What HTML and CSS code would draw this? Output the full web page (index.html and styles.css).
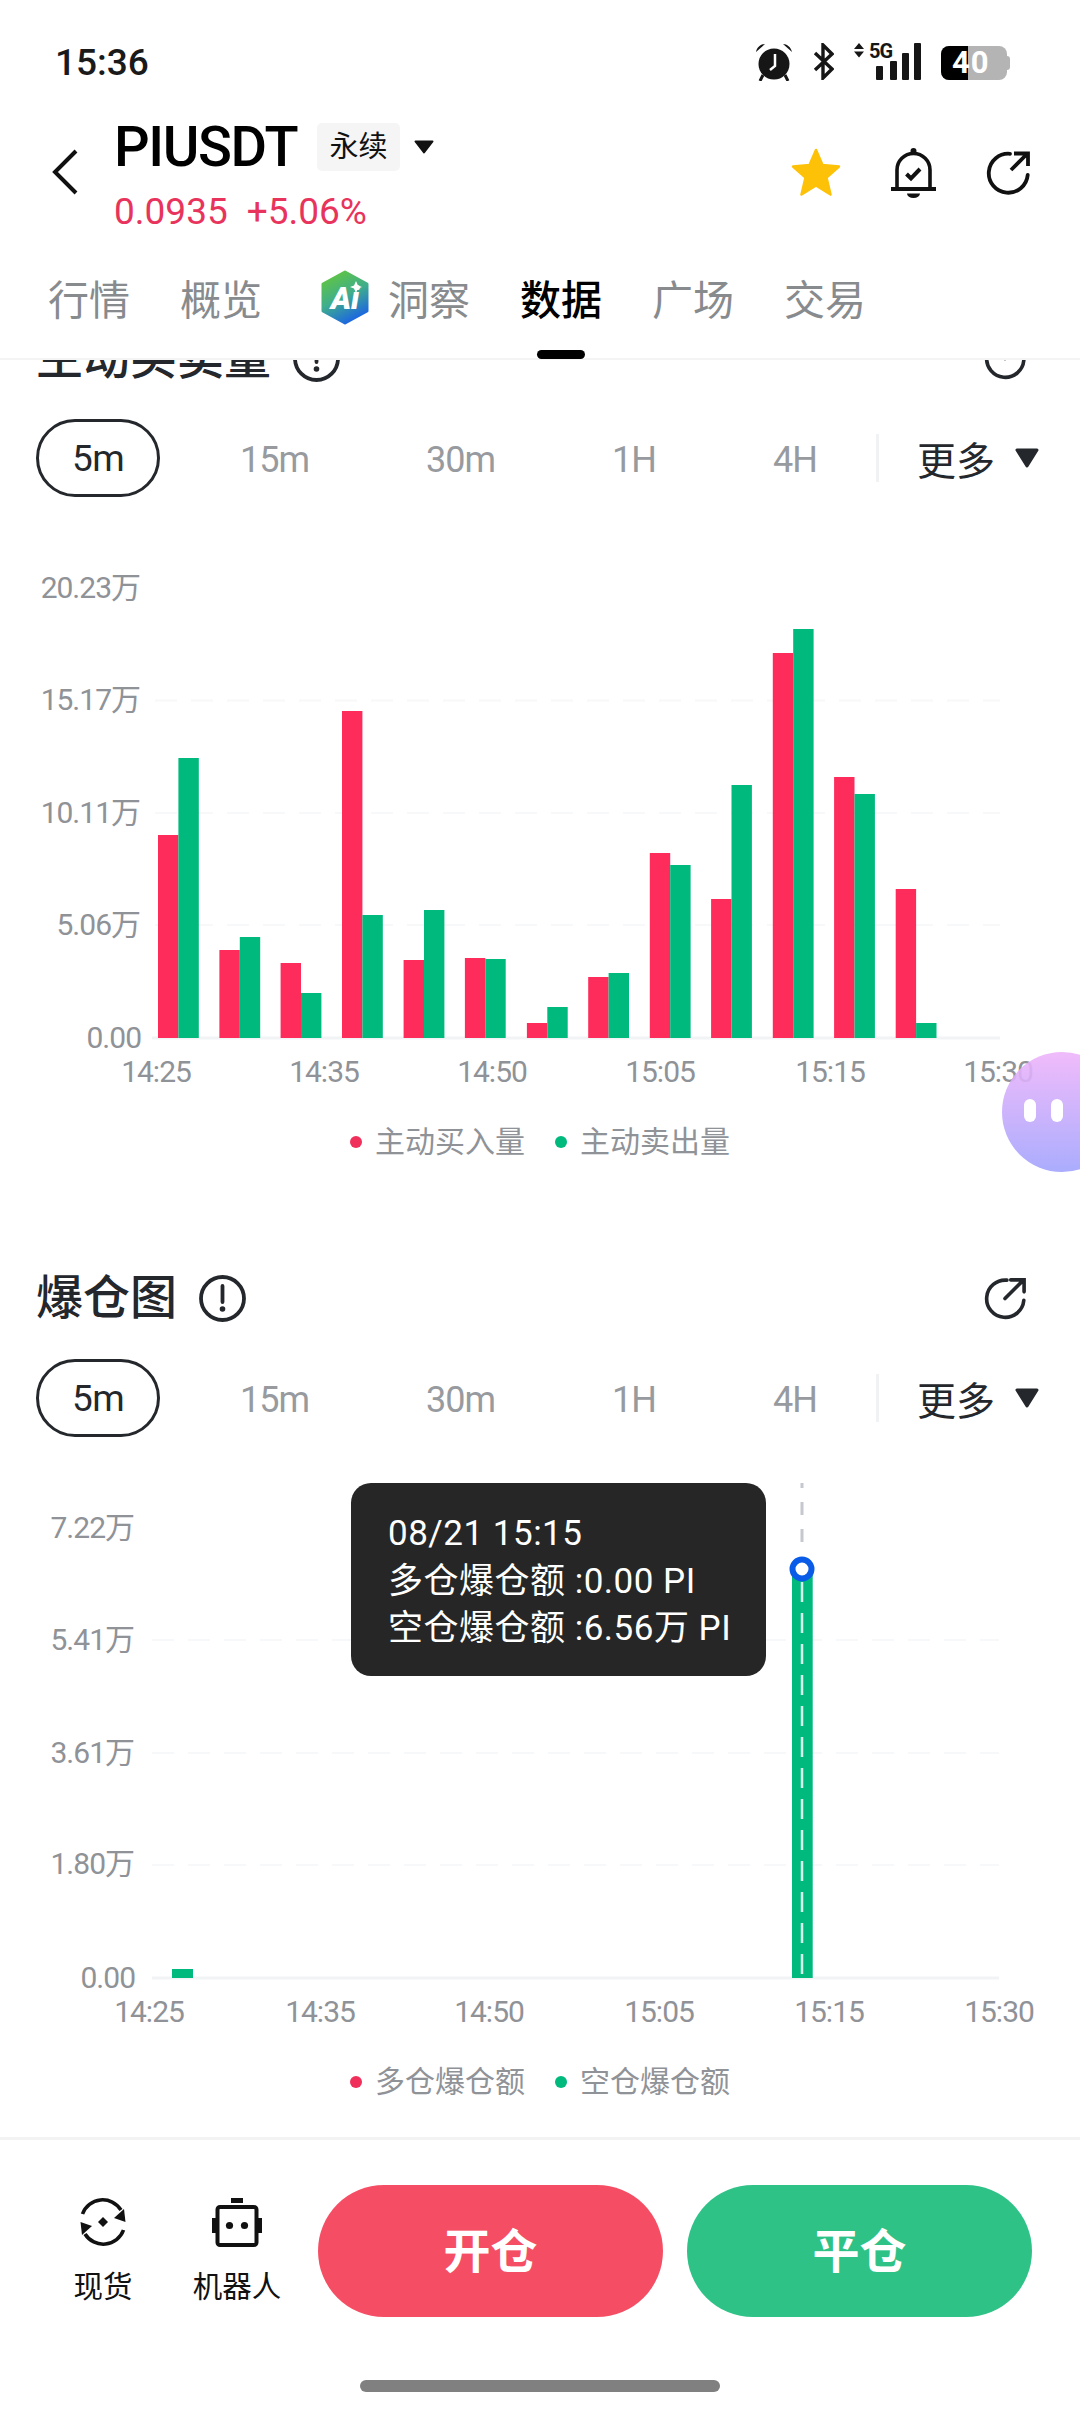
FILE: index.html
```html
<!DOCTYPE html>
<html lang="zh-CN">
<head>
    <meta charset="UTF-8">
    <meta name="viewport" content="width=device-width, initial-scale=1.0">
    <title>PIUSDT 数据</title>
    <link rel="stylesheet" href="styles.css">
</head>
<body>
    <div class="status-bar">
        <span class="clock">15:36</span>
        <div class="status-icons">
            <svg width="38" height="38" viewBox="0 0 38 38"><circle cx="19" cy="21" r="15.5" fill="#161616"/><path d="M1 9 C2 4 6 1 10 1 Z M37 9 C36 4 32 1 28 1 Z" fill="#161616"/><path d="M8 32 L5 38 M30 32 L33 38" stroke="#161616" stroke-width="3"/><path d="M20 11 V23 L15 27" fill="none" stroke="#fff" stroke-width="2.5"/></svg>
            <svg width="21" height="37" viewBox="0 0 21 37"><path d="M2 10 L19 26 L10 35 V2 L19 11 L2 27" fill="none" stroke="#161616" stroke-width="3.4"/></svg>
            <svg width="67" height="37" viewBox="0 0 67 37"><path d="M0 6 L5 0 L10 6 Z M0 8.5 H10 L5 14.5 Z" fill="#161616"/><text class="net-label" x="15" y="15">5G</text><rect x="22" y="23" width="7" height="14" rx="1" fill="#161616"/><rect x="36" y="18" width="7" height="19" rx="1" fill="#161616"/><rect x="48" y="10" width="7" height="27" rx="1" fill="#161616"/><rect x="60" y="0" width="7" height="37" rx="1" fill="#161616"/></svg>
            <div class="battery">
                <div class="battery-fill"></div>
                <span class="battery-num">40</span>
            </div>
        </div>
    </div>

    <header class="top-bar">
        <svg class="back-icon" width="26" height="46" viewBox="0 0 26 46"><path d="M24 2 L3 23 L24 44" fill="none" stroke="#111" stroke-width="4"/></svg>
        <div class="pair">
            <div class="pair-name">
                <h1>PIUSDT</h1>
                <span class="pair-tag">永续</span>
                <svg width="20" height="14" viewBox="0 0 20 14"><path d="M1.5 1.5 H18.5 L10 12.5 Z" fill="#111" stroke="#111" stroke-width="2" stroke-linejoin="round"/></svg>
            </div>
            <div class="pair-price"><span>0.0935</span><span>+5.06%</span></div>
        </div>
        <div class="top-actions">
            <svg width="50" height="49" viewBox="0 0 50 49"><path d="M25 2 L31.5 17 L48 18.5 L35.5 29.5 L39.5 46.5 L25 37.5 L10.5 46.5 L14.5 29.5 L2 18.5 L18.5 17 Z" fill="#fdc108" stroke="#fdc108" stroke-width="2.5" stroke-linejoin="round"/></svg>
            <svg width="45" height="50" viewBox="0 0 45 50"><circle cx="22.5" cy="3" r="3" fill="#111"/><path d="M6 40 V22 A16.5 16.5 0 0 1 39 22 V40" fill="none" stroke="#111" stroke-width="3.6"/><path d="M0 41 H45" stroke="#111" stroke-width="4"/><path d="M16 45.5 H29 A6.5 4.5 0 0 1 16 45.5 Z" fill="#111"/><path d="M15.5 26 L20 30.5 L29 21" fill="none" stroke="#111" stroke-width="4"/></svg>
            <svg width="44" height="44" viewBox="0 0 44 44"><path d="M24 2.8 A19.5 19.5 0 1 0 41.7 24" fill="none" stroke="#111" stroke-width="3.8" stroke-linecap="round"/><path d="M25 19 L41 3 M28 2.5 H42 V15" fill="none" stroke="#111" stroke-width="3.8"/></svg>
        </div>
    </header>

    <nav class="tabs">
        <span class="tab">行情</span>
        <span class="tab">概览</span>
        <span class="tab tab-ai">
            <svg width="50" height="55" viewBox="0 0 50 55">
                <defs>
                    <linearGradient id="ai-grad" x1="0.2" y1="0" x2="0.65" y2="1">
                        <stop offset="0" stop-color="#62c63e"/>
                        <stop offset="0.5" stop-color="#3fae8c"/>
                        <stop offset="1" stop-color="#1a62e6"/>
                    </linearGradient>
                </defs>
                <path d="M25 2 L47 14 V41 L25 53 L3 41 V14 Z" fill="url(#ai-grad)" stroke="url(#ai-grad)" stroke-width="3" stroke-linejoin="round"/>
                <text class="ai-mark" x="25" y="39">Ai</text>
                <path d="M36 11 L38 15.5 L42 17 L38 18.5 L36 23 L34 18.5 L30 17 L34 15.5 Z" fill="#fff"/>
            </svg>
            洞察
        </span>
        <span class="tab tab-active">数据</span>
        <span class="tab">广场</span>
        <span class="tab">交易</span>
    </nav>

    <main class="content">
        <section class="panel panel-first">
            <div class="panel-head">
                <h2>主动买卖量</h2>
                <svg width="47" height="47" viewBox="0 0 47 47"><circle cx="23.5" cy="23.5" r="21.5" fill="none" stroke="#24272b" stroke-width="3.8"/><path d="M23.5 11 V27" stroke="#24272b" stroke-width="3.8" stroke-linecap="round"/><circle cx="23.5" cy="34" r="2.8" fill="#24272b"/></svg>
                <svg class="panel-share" width="42" height="43" viewBox="0 0 44 44"><path d="M24 2.8 A19.5 19.5 0 1 0 41.7 24" fill="none" stroke="#24272b" stroke-width="3.8" stroke-linecap="round"/><path d="M22 22 L41 3 M28 2.5 H42 V15" fill="none" stroke="#24272b" stroke-width="3.8" stroke-linecap="round"/></svg>
            </div>
            <div class="frames">
                <div class="frame-list">
                    <span class="frame frame-active">5m</span>
                    <span class="frame">15m</span>
                    <span class="frame">30m</span>
                    <span class="frame">1H</span>
                    <span class="frame">4H</span>
                </div>
                <div class="frame-more">更多
                    <svg width="24" height="20" viewBox="0 0 24 20"><path d="M2 2 H22 L12 18 Z" fill="#24272b" stroke="#24272b" stroke-width="3" stroke-linejoin="round"/></svg>
                </div>
            </div>
            <div class="chart">
                <svg class="chart-svg" width="1080" height="570" viewBox="0 0 1080 570">
                    <path class="grid" d="M155 170.5 H1000 M155 283 H1000 M155 395 H1000"/>
                    <path class="base" d="M152 508 H1000"/>
                    <g class="up">
                        <rect x="158" y="305" width="20.4" height="203"/>
                        <rect x="219.4" y="420" width="20.4" height="88"/>
                        <rect x="280.6" y="433" width="20.4" height="75"/>
                        <rect x="342" y="181" width="20.4" height="327"/>
                        <rect x="403.6" y="430" width="20.4" height="78"/>
                        <rect x="464.9" y="428" width="20.4" height="80"/>
                        <rect x="526.9" y="493" width="20.4" height="15"/>
                        <rect x="588.2" y="447" width="20.4" height="61"/>
                        <rect x="649.8" y="323" width="20.4" height="185"/>
                        <rect x="711.1" y="369" width="20.4" height="139"/>
                        <rect x="772.8" y="123" width="20.4" height="385"/>
                        <rect x="834.1" y="247" width="20.4" height="261"/>
                        <rect x="895.7" y="359" width="20.4" height="149"/>
                    </g>
                    <g class="down">
                        <rect x="178.4" y="228" width="20.4" height="280"/>
                        <rect x="239.8" y="407" width="20.4" height="101"/>
                        <rect x="301" y="463" width="20.4" height="45"/>
                        <rect x="362.4" y="385" width="20.4" height="123"/>
                        <rect x="424" y="380" width="20.4" height="128"/>
                        <rect x="485.3" y="429" width="20.4" height="79"/>
                        <rect x="547.3" y="477" width="20.4" height="31"/>
                        <rect x="608.6" y="443" width="20.4" height="65"/>
                        <rect x="670.2" y="335" width="20.4" height="173"/>
                        <rect x="731.5" y="255" width="20.4" height="253"/>
                        <rect x="793.2" y="99" width="20.4" height="409"/>
                        <rect x="854.5" y="264" width="20.4" height="244"/>
                        <rect x="916.1" y="493" width="20.4" height="15"/>
                    </g>
                    <g class="axis axis-y">
                        <text x="140" y="57">20.23万</text>
                        <text x="140" y="169">15.17万</text>
                        <text x="140" y="282">10.11万</text>
                        <text x="140" y="394">5.06万</text>
                        <text x="141" y="507">0.00</text>
                    </g>
                    <g class="axis axis-x">
                        <text x="156" y="541">14:25</text>
                        <text x="324" y="541">14:35</text>
                        <text x="492" y="541">14:50</text>
                        <text x="660" y="541">15:05</text>
                        <text x="830" y="541">15:15</text>
                        <text x="998" y="541">15:30</text>
                    </g>
                </svg>
                <div class="legend">
                    <span class="legend-item"><i class="dot dot-up"></i>主动买入量</span>
                    <span class="legend-item"><i class="dot dot-down"></i>主动卖出量</span>
                </div>
            </div>
        </section>

        <section class="panel">
            <div class="panel-head">
                <h2>爆仓图</h2>
                <svg width="47" height="47" viewBox="0 0 47 47"><circle cx="23.5" cy="23.5" r="21.5" fill="none" stroke="#24272b" stroke-width="3.8"/><path d="M23.5 11 V27" stroke="#24272b" stroke-width="3.8" stroke-linecap="round"/><circle cx="23.5" cy="34" r="2.8" fill="#24272b"/></svg>
                <svg class="panel-share" width="42" height="43" viewBox="0 0 44 44"><path d="M24 2.8 A19.5 19.5 0 1 0 41.7 24" fill="none" stroke="#24272b" stroke-width="3.8" stroke-linecap="round"/><path d="M22 22 L41 3 M28 2.5 H42 V15" fill="none" stroke="#24272b" stroke-width="3.8" stroke-linecap="round"/></svg>
            </div>
            <div class="frames">
                <div class="frame-list">
                    <span class="frame frame-active">5m</span>
                    <span class="frame">15m</span>
                    <span class="frame">30m</span>
                    <span class="frame">1H</span>
                    <span class="frame">4H</span>
                </div>
                <div class="frame-more">更多
                    <svg width="24" height="20" viewBox="0 0 24 20"><path d="M2 2 H22 L12 18 Z" fill="#24272b" stroke="#24272b" stroke-width="3" stroke-linejoin="round"/></svg>
                </div>
            </div>
            <div class="chart">
                <svg class="chart-svg" width="1080" height="570" viewBox="0 0 1080 570">
                    <path class="grid" d="M152 170 H999 M152 283 H999 M152 395 H999"/>
                    <path class="base" d="M152 508 H999"/>
                    <g class="down">
                        <rect x="172" y="499" width="21" height="9"/>
                        <rect x="792" y="98" width="20.7" height="410"/>
                    </g>
                    <path class="cursor-top" d="M802 13 V78"/>
                    <path class="cursor-bar" d="M802 112 V508"/>
                    <circle class="cursor-dot" cx="802" cy="99" r="9.5"/>
                    <g class="axis axis-y">
                        <text x="134" y="57">7.22万</text>
                        <text x="134" y="169">5.41万</text>
                        <text x="134" y="282">3.61万</text>
                        <text x="134" y="393">1.80万</text>
                        <text x="135" y="507">0.00</text>
                    </g>
                    <g class="axis axis-x">
                        <text x="149" y="541">14:25</text>
                        <text x="320" y="541">14:35</text>
                        <text x="489" y="541">14:50</text>
                        <text x="659" y="541">15:05</text>
                        <text x="829" y="541">15:15</text>
                        <text x="999" y="541">15:30</text>
                    </g>
                </svg>
                <div class="chart-tip">
                    <div>08/21 15:15</div>
                    <div>多仓爆仓额 :0.00 PI</div>
                    <div>空仓爆仓额 :6.56万 PI</div>
                </div>
                <div class="legend">
                    <span class="legend-item"><i class="dot dot-up"></i>多仓爆仓额</span>
                    <span class="legend-item"><i class="dot dot-down"></i>空仓爆仓额</span>
                </div>
            </div>
        </section>
    </main>

    <footer class="bottom-bar">
        <div class="bottom-row">
            <div class="shortcut">
                <svg width="50" height="50" viewBox="0 0 50 50"><path d="M4.5 17 A21.5 21.5 0 0 1 43 13" fill="none" stroke="#111" stroke-width="3.6"/><path d="M47.5 25 L36 21 L46 12 Z" fill="#111"/><path d="M45.5 33 A21.5 21.5 0 0 1 7 37" fill="none" stroke="#111" stroke-width="3.6"/><path d="M2.5 25 L14 29 L4 38 Z" fill="#111"/><path d="M25 20 L30 25 L25 30 L20 25 Z" fill="#111"/></svg>
                <span>现货</span>
            </div>
            <div class="shortcut">
                <svg width="50" height="50" viewBox="0 0 50 50"><rect x="19" y="1" width="12" height="5" fill="#111"/><rect x="5.5" y="10" width="39" height="38" rx="2.5" fill="none" stroke="#111" stroke-width="4"/><rect x="0" y="21" width="4" height="15" fill="#111"/><rect x="46" y="21" width="4" height="15" fill="#111"/><circle cx="17.5" cy="28.5" r="3.6" fill="#111"/><circle cx="32.5" cy="28.5" r="3.6" fill="#111"/></svg>
                <span>机器人</span>
            </div>
            <button class="trade-btn trade-open">开仓</button>
            <button class="trade-btn trade-close">平仓</button>
        </div>
        <div class="home-bar"></div>
    </footer>

    <div class="float-bot">
        <i></i><i></i>
    </div>
</body>
</html>
```

FILE: styles.css
```css
* {
    box-sizing: border-box;
}

html, body {
    margin: 0;
    padding: 0;
}

body {
    position: relative;
    width: 1080px;
    height: 2412px;
    overflow: hidden;
    display: flex;
    flex-direction: column;
    background-color: #fff;
    color: #111;
    font-family: Roboto, "Noto Sans CJK SC", sans-serif;
}

/* status bar */
.status-bar {
    height: 92px;
    padding: 26px 73px 0 55px;
    display: flex;
    justify-content: space-between;
    align-items: flex-start;
}

.clock {
    font-size: 37px;
    font-weight: 500;
    line-height: 74px;
    color: #1a1a1a;
}

.status-icons {
    display: flex;
    align-items: flex-start;
    gap: 20px;
    margin-top: 17px;
}

.net-label {
    font-family: Roboto, sans-serif;
    font-size: 20px;
    font-weight: 700;
    letter-spacing: -1px;
    fill: #161616;
}

.battery {
    position: relative;
    width: 66px;
    height: 34px;
    margin-top: 3px;
    border-radius: 8px;
    background-color: #b4b4b4;
}

.battery::after {
    content: "";
    position: absolute;
    right: -3px;
    top: 10px;
    width: 3px;
    height: 14px;
    border-radius: 0 3px 3px 0;
    background-color: #b4b4b4;
}

.battery-fill {
    width: 27px;
    height: 100%;
    border-radius: 8px 0 0 8px;
    background-color: #000;
}

.battery-num {
    position: absolute;
    left: 11px;
    top: 0;
    font-size: 31px;
    font-weight: 700;
    line-height: 34px;
    color: #fff;
    letter-spacing: 1px;
}

/* pair header */
.top-bar {
    height: 178px;
    padding: 0 50px 0 52px;
    display: flex;
    align-items: center;
}

.back-icon {
    margin: 0 36px 18px 0;
}

.pair {
    margin-bottom: 8px;
}

.pair-name {
    display: flex;
    align-items: center;
    height: 60px;
}

.pair-name h1 {
    margin: 0;
    font-size: 56px;
    font-weight: 500;
    letter-spacing: -1.4px;
    line-height: 60px;
    color: #000;
}

.pair-tag {
    width: 83px;
    height: 48px;
    margin: 0 14px 0 20px;
    border-radius: 5px;
    background-color: #f5f5f5;
    font-size: 29px;
    line-height: 48px;
    text-align: center;
}

.pair-price {
    display: flex;
    gap: 19px;
    margin-top: 10px;
    height: 50px;
    font-size: 37px;
    line-height: 50px;
    color: #e8345c;
}

.top-actions {
    margin: 0 0 17px auto;
    display: flex;
    align-items: center;
    gap: 50px;
}

/* tabs */
.tabs {
    position: relative;
    z-index: 2;
    height: 90px;
    padding: 0 0 34px 48px;
    display: flex;
    gap: 50px;
    border-bottom: 2px solid #f4f4f4;
    background-color: #fff;
}

.tab {
    position: relative;
    display: flex;
    align-items: center;
    font-size: 41px;
    color: #888b8e;
}

.tab-ai {
    gap: 18px;
    margin-left: 8px;
}

.tab-active {
    color: #000;
    font-weight: 500;
}

.tab-active::after {
    content: "";
    position: absolute;
    left: 17px;
    bottom: -35px;
    width: 48px;
    height: 9px;
    border-radius: 5px;
    background-color: #000;
}

.ai-mark {
    font-family: Roboto, sans-serif;
    font-size: 31px;
    font-weight: 900;
    font-style: italic;
    fill: #fff;
    text-anchor: middle;
}

/* scrolling content */
.content {
    flex: 1;
    min-height: 0;
    overflow: hidden;
}

.panel-first {
    margin-top: -32px;
}

.panel-head {
    height: 60px;
    padding: 0 54px 0 36px;
    display: flex;
    align-items: center;
    gap: 22px;
}

.panel-head h2 {
    margin: 0;
    font-size: 47px;
    font-weight: 500;
    line-height: 60px;
    color: #24272b;
}

.panel-share {
    margin-left: auto;
}

.frames {
    margin-top: 31px;
    height: 78px;
    padding: 0 41px 0 36px;
    display: flex;
    align-items: center;
    justify-content: space-between;
}

.frame-list {
    display: flex;
    align-items: center;
    gap: 117px;
}

.frame {
    padding-top: 4px;
    font-size: 36px;
    letter-spacing: -1px;
    color: #979a9e;
}

.frame-active {
    width: 124px;
    height: 78px;
    margin-right: -37px;
    padding-top: 2px;
    border: 3.5px solid #24272b;
    border-radius: 39px;
    font-size: 37px;
    letter-spacing: -0.5px;
    line-height: 69px;
    text-align: center;
    color: #24272b;
}

.frame-more {
    height: 48px;
    padding-left: 38px;
    display: flex;
    align-items: center;
    gap: 20px;
    border-left: 3px solid #f1f2f3;
    font-size: 39px;
    color: #24272b;
    white-space: nowrap;
}

.chart {
    position: relative;
    margin-top: 33px;
    height: 738px;
}

.chart-svg {
    display: block;
}

.grid {
    fill: none;
    stroke: #f7f8f9;
    stroke-width: 2;
    stroke-dasharray: 22 14;
}

.base {
    fill: none;
    stroke: #f1f3f5;
    stroke-width: 3;
}

.up {
    fill: #fd2c5b;
}

.down {
    fill: #00b97c;
}

.axis {
    font-family: Roboto, "Noto Sans CJK SC", sans-serif;
    font-size: 30px;
    letter-spacing: -1px;
    fill: #8f9297;
    dominant-baseline: central;
}

.axis-y {
    text-anchor: end;
}

.axis-x {
    text-anchor: middle;
}

.cursor-top {
    fill: none;
    stroke: #c5c8ce;
    stroke-width: 3;
    stroke-dasharray: 5 14 13 14 13 14 13;
}

.cursor-bar {
    fill: none;
    stroke: #d6f3e9;
    stroke-width: 2.5;
    stroke-dasharray: 20 11;
}

.cursor-dot {
    fill: #fff;
    stroke: #0a5ce8;
    stroke-width: 6;
}

.chart-tip {
    position: absolute;
    left: 351px;
    top: 13px;
    width: 415px;
    height: 193px;
    padding: 27px 0 0 37px;
    border-radius: 20px;
    background-color: #262626;
    color: #fff;
    font-size: 35px;
    letter-spacing: 0.5px;
    line-height: 47.5px;
    white-space: nowrap;
}

.legend {
    margin-top: 19px;
    display: flex;
    justify-content: center;
    gap: 30px;
}

.legend-item {
    display: flex;
    align-items: center;
    gap: 13px;
    font-size: 30px;
    line-height: 46px;
    color: #8f9297;
}

.dot {
    width: 12px;
    height: 12px;
    border-radius: 50%;
}

.dot-up {
    background-color: #f02f5a;
}

.dot-down {
    background-color: #00b97c;
}

/* bottom actions */
.bottom-bar {
    height: 275px;
    padding-top: 45px;
    border-top: 3px solid #f3f3f3;
    background-color: #fff;
}

.bottom-row {
    display: flex;
    padding-left: 53px;
    gap: 34px;
}

.shortcut {
    width: 100px;
    padding-top: 12px;
    display: flex;
    flex-direction: column;
    align-items: center;
    gap: 21px;
    font-size: 29.5px;
    line-height: 38px;
    white-space: nowrap;
}

.trade-btn {
    width: 345px;
    height: 132px;
    padding: 0 0 8px;
    border: none;
    border-radius: 66px;
    color: #fff;
    font-family: inherit;
    font-size: 47px;
    font-weight: 700;
}

.trade-open {
    margin-left: -3px;
    background-color: #f54e64;
}

.trade-close {
    margin-left: -10px;
    background-color: #2ec287;
}

.home-bar {
    width: 360px;
    height: 12px;
    margin: 63px auto 0;
    border-radius: 6px;
    background-color: #808080;
}

/* floating helper */
.float-bot {
    position: absolute;
    left: 1002px;
    top: 1052px;
    width: 120px;
    height: 120px;
    padding: 47px 0 0 22px;
    display: flex;
    gap: 15px;
    border-radius: 50%;
    background: linear-gradient(180deg, rgba(238, 178, 250, 0.88), rgba(166, 168, 253, 0.95));
}

.float-bot i {
    width: 12px;
    height: 23px;
    border-radius: 6px;
    background-color: #fff;
}
```
